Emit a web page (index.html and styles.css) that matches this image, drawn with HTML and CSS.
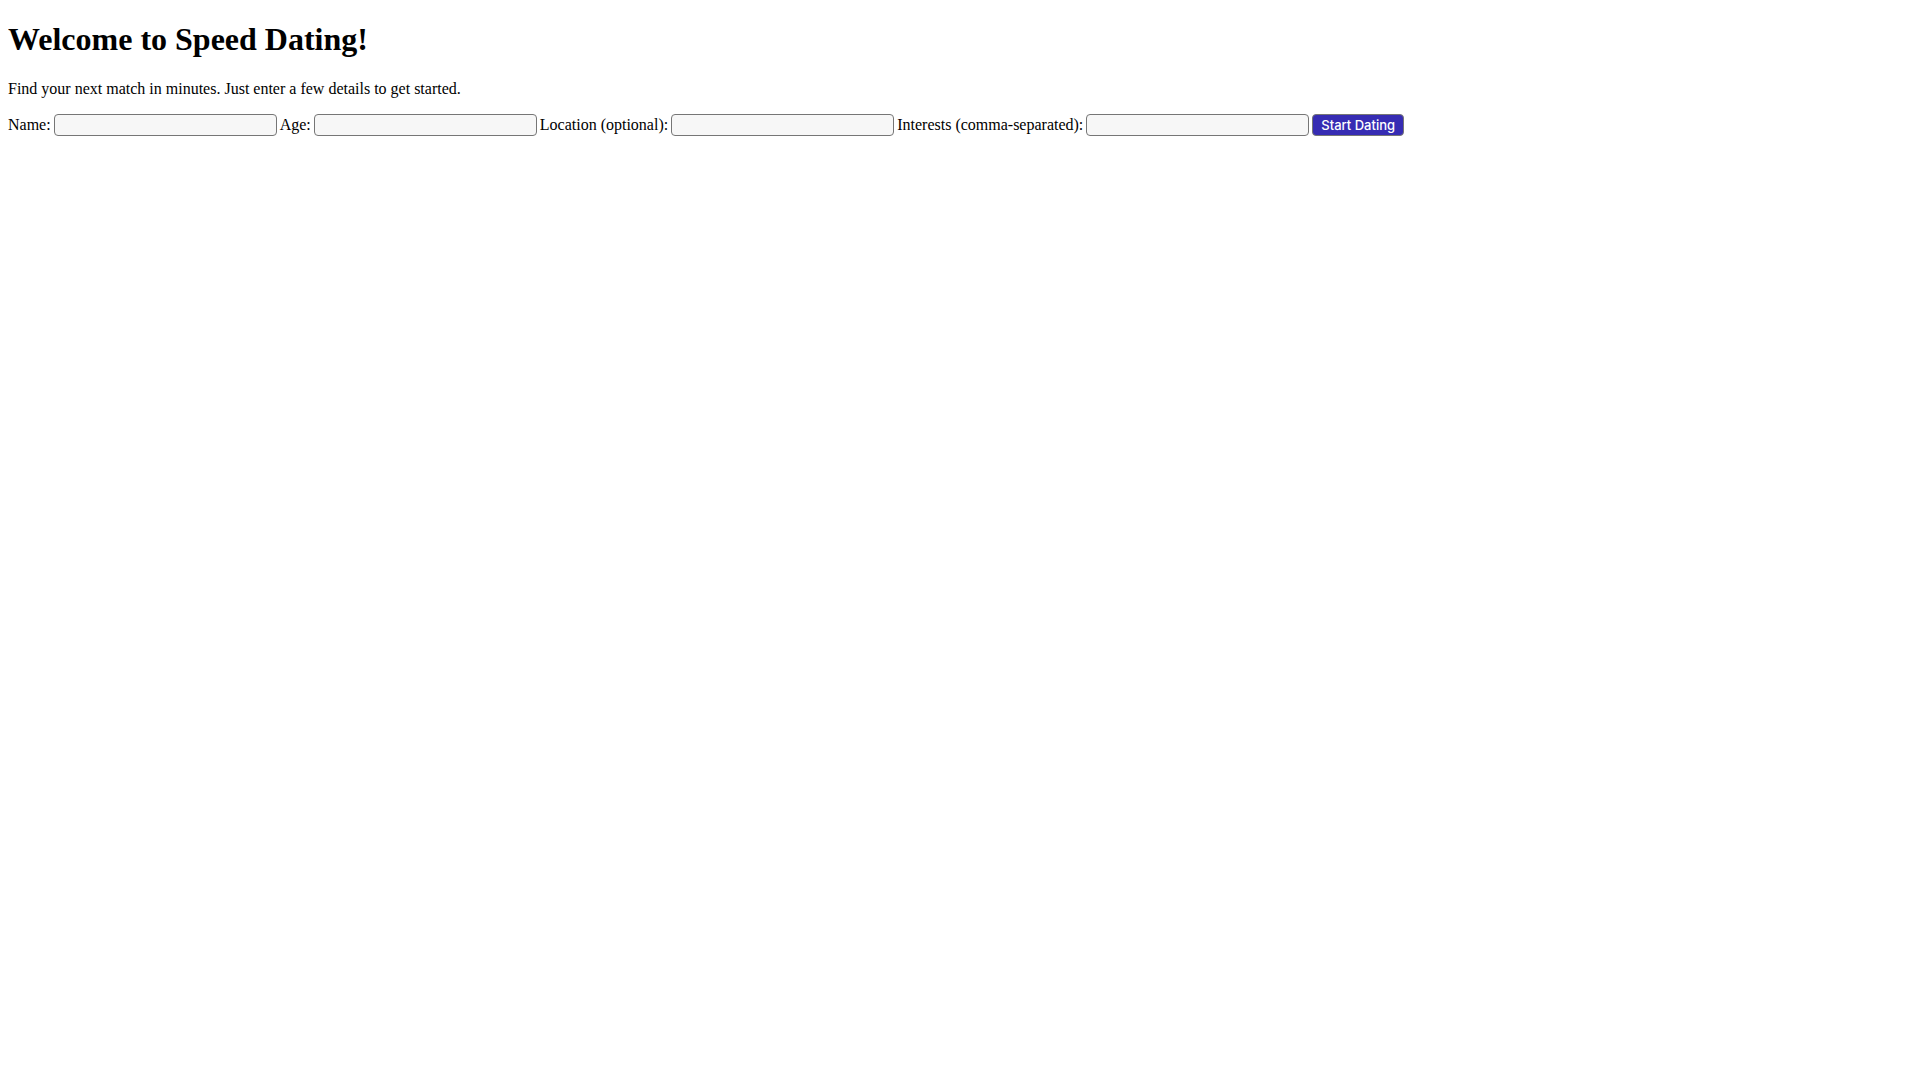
FILE: index.html
```html
<!DOCTYPE html>
<html lang="en">
<head>
  <meta charset="UTF-8">
  <meta name="viewport" content="width=device-width, initial-scale=1">
  <title>Speed Dating</title>
  <link rel="stylesheet" href="styles.css">
</head>
<body>
  <h1>Welcome to Speed Dating!</h1>
  <p>Find your next match in minutes. Just enter a few details to get started.</p>
  <form class="signup">
    <label for="name">Name:</label>
    <input type="text" id="name" name="name" required>
    <label for="age">Age:</label>
    <input type="number" id="age" name="age" required>
    <label for="location">Location (optional):</label>
    <input type="text" id="location" name="location">
    <label for="interests">Interests (comma-separated):</label>
    <input type="text" id="interests" name="interests">
    <button type="submit">Start Dating</button>
  </form>
</body>
</html>
```

FILE: styles.css
```css
body {
  margin: 0 8px;
  font-family: "Liberation Serif", "Times New Roman", serif;
  font-size: 16px;
}
h1 {
  margin: 21px 0 22px;
  font-size: 32px;
}
p {
  margin: 0 0 16px;
}
.signup {
  display: flex;
  flex-wrap: wrap;
  align-items: center;
  gap: 3px;
}
input,
button {
  box-sizing: border-box;
  height: 22px;
  font-family: Inter, sans-serif;
  font-size: 13px;
  border: 1px solid #767676;
  border-radius: 4px;
}
input {
  width: 223px;
  background-color: #f7f7f7;
}
button {
  padding: 0 8px;
  background-color: #362cb3;
  color: #ffffff;
  font-weight: 500;
}
```
